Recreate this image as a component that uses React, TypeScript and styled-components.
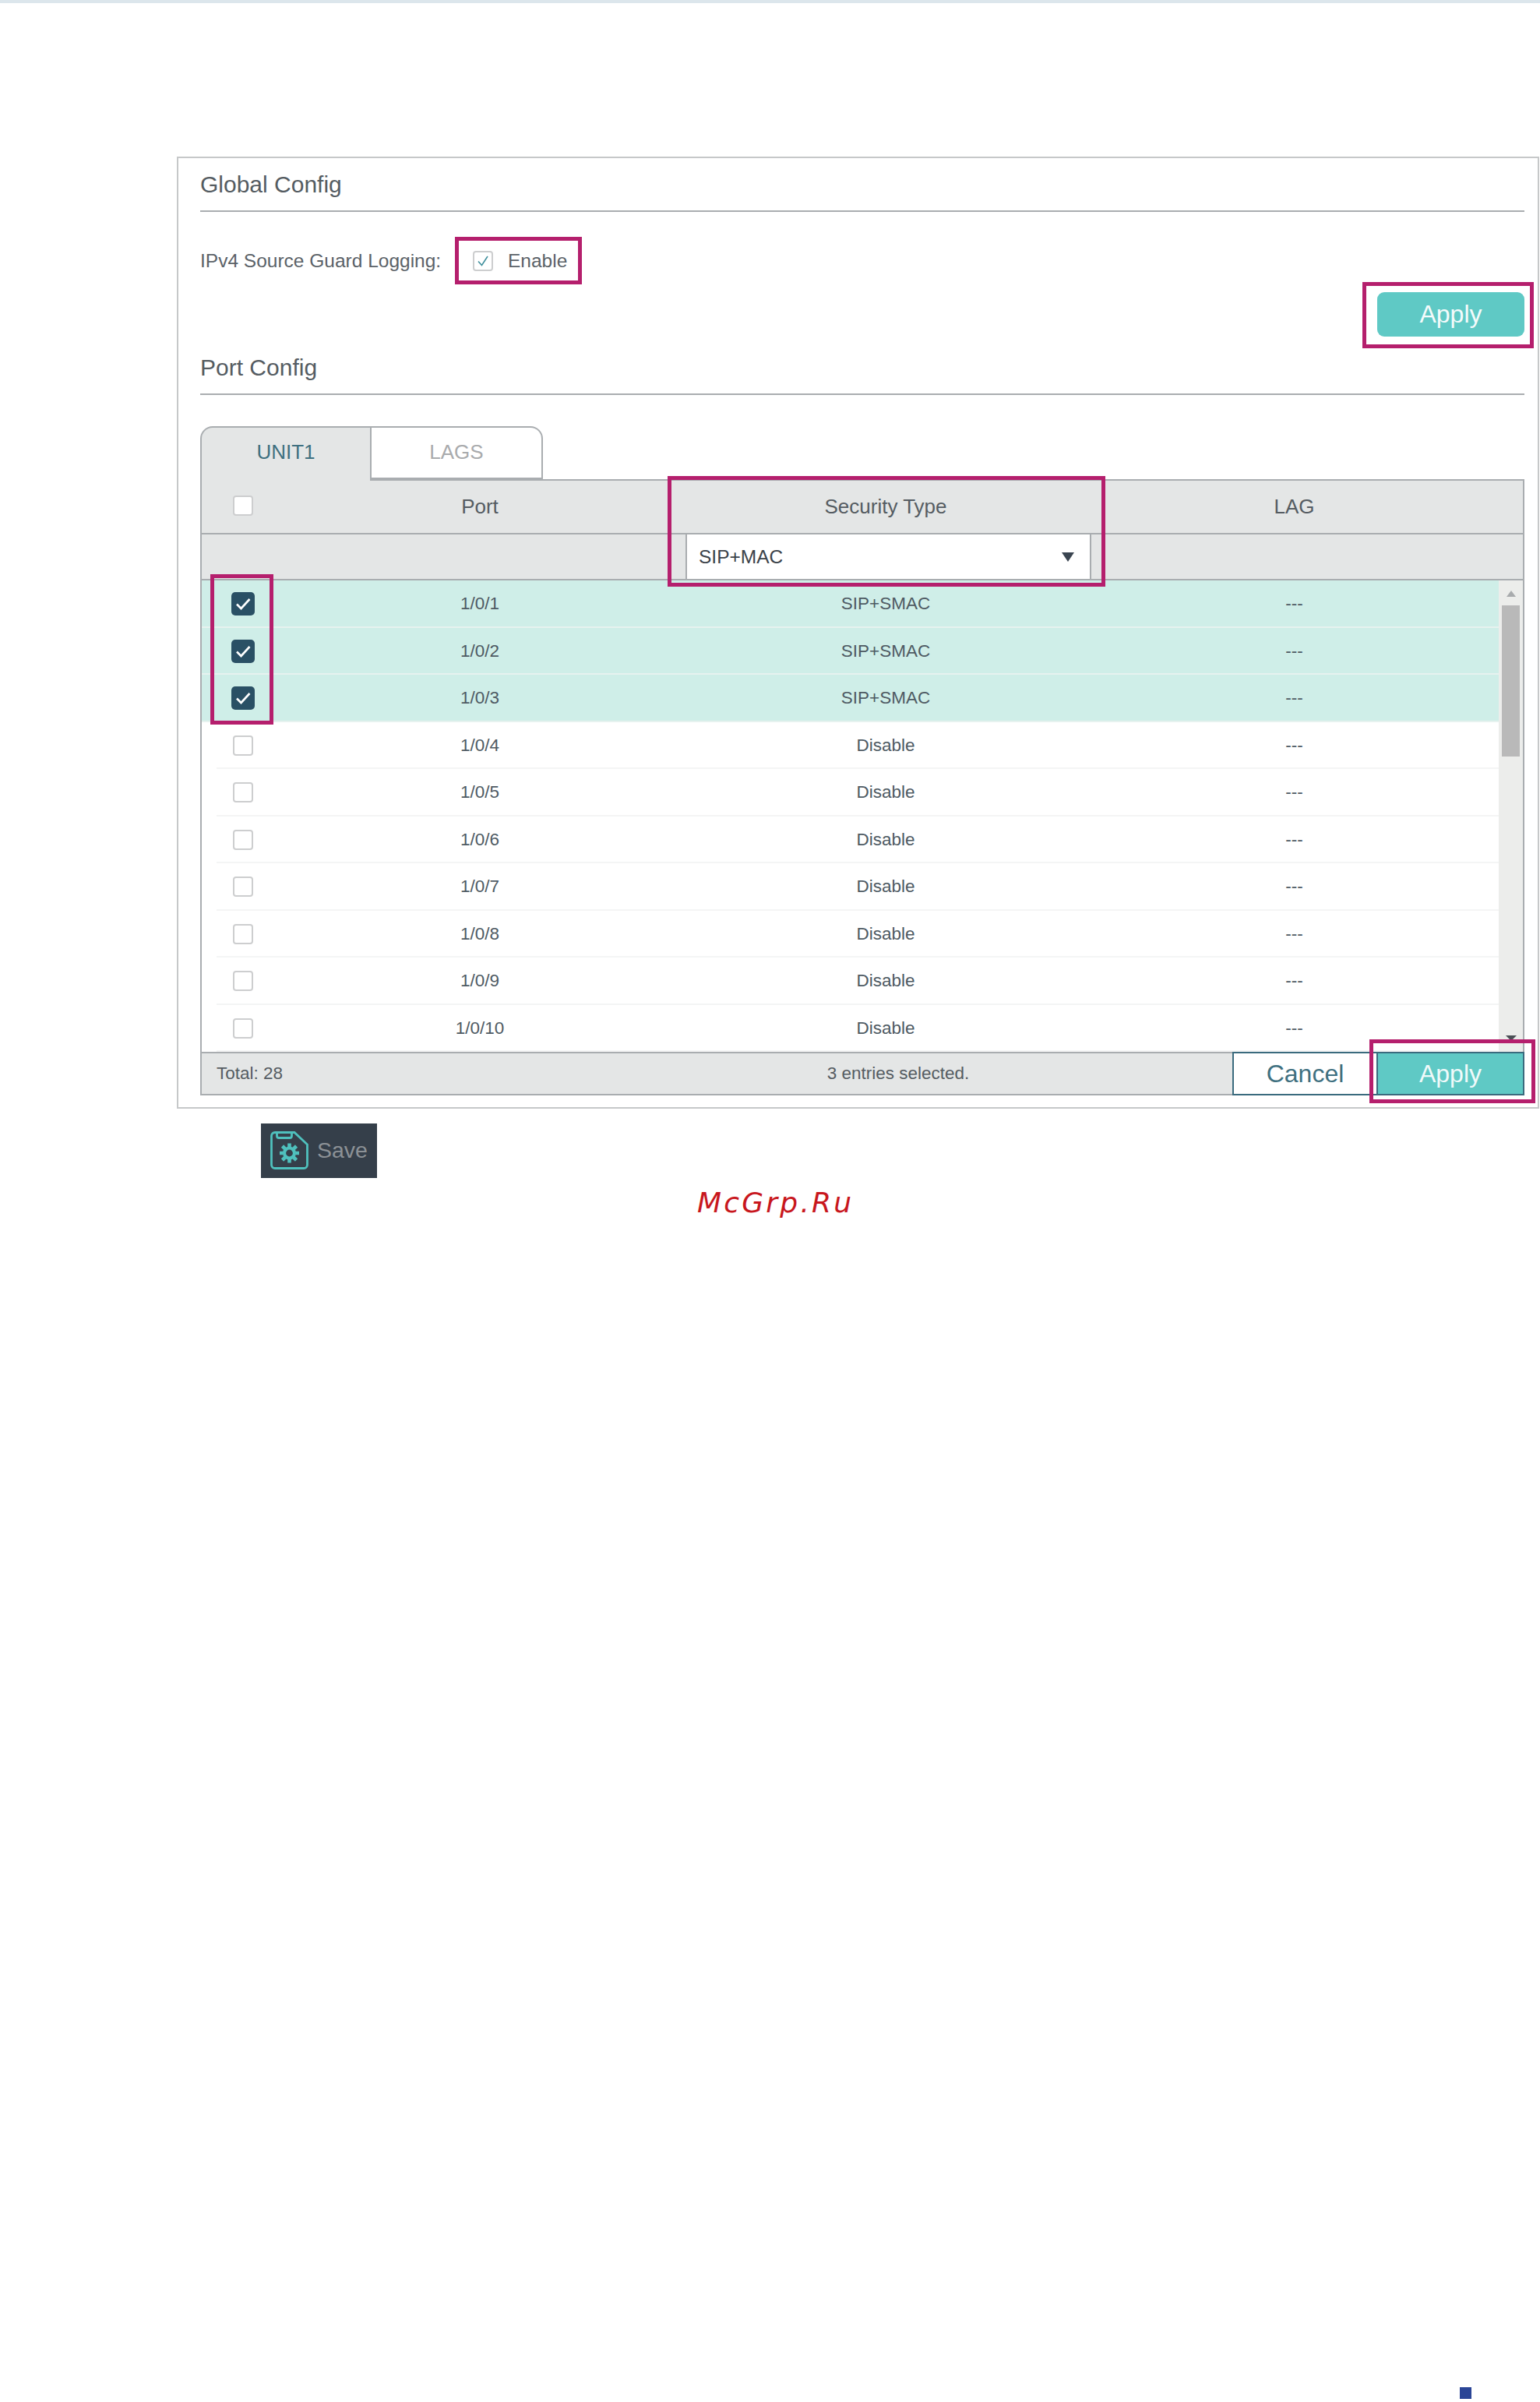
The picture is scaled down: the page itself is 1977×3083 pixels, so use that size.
import React from "react"
import styled, { createGlobalStyle } from "styled-components"

const GlobalStyle = createGlobalStyle`
  html, body {
    margin: 0;
    padding: 0;
    background: #fff;
  }
  * {
    box-sizing: border-box;
  }
`

const Page = styled.div`
  width: 1977px;
  height: 3083px;
  display: flex;
  flex-direction: column;
  overflow: hidden;
  font-family: "Liberation Sans", Arial, sans-serif;
  color: #555c62;
`

const TopBar = styled.div`
  height: 4px;
  flex: none;
  background: #dce6ec;
`

const Panel = styled.div`
  width: 1749px;
  margin: 197px 0 0 227px;
  padding: 0 17px 15px 28px;
  border: 2px solid #c6c8c9;
`

const SectionTitle = styled.h2`
  height: 69px;
  margin: 0;
  padding-top: 17px;
  border-bottom: 2px solid #a9adb0;
  font-size: 30px;
  line-height: 34px;
  font-weight: 400;
  color: #555c62;
`

const LoggingRow = styled.div`
  margin-top: 32px;
  display: flex;
  align-items: center;
  font-size: 24.5px;
`

const LoggingLabel = styled.span`
  width: 327px;
  color: #5b6268;
`

const EnableBox = styled.div`
  width: 163px;
  height: 61px;
  padding-left: 18px;
  display: flex;
  align-items: center;
  gap: 19px;
  border: 5px solid #b51f6d;
  color: #5b6268;
`

const ApplyRow = styled.div`
  margin: 10px 0 6px;
  display: flex;
  justify-content: flex-end;
`

const ApplyHost = styled.div`
  position: relative;
`

const RoundButton = styled.button`
  width: 189px;
  height: 57px;
  display: block;
  padding: 0;
  border: none;
  border-radius: 9px;
  background: #5fc9c5;
  color: #f4fbfb;
  font: 400 32px "Liberation Sans", Arial, sans-serif;
`

const Highlight = styled.div<{ $top: number; $left: number; $width: number; $height: number }>`
  position: absolute;
  z-index: 2;
  top: ${(p) => p.$top}px;
  left: ${(p) => p.$left}px;
  width: ${(p) => p.$width}px;
  height: ${(p) => p.$height}px;
  border: 5px solid #b51f6d;
  pointer-events: none;
`

const Tabs = styled.div`
  margin-top: 40px;
  display: flex;
  align-items: flex-start;
`

const Tab = styled.div<{ $active?: boolean }>`
  position: relative;
  z-index: 1;
  width: 220px;
  height: ${(p) => (p.$active ? "70px" : "68px")};
  margin-bottom: ${(p) => (p.$active ? "-2px" : "0")};
  padding-top: 16px;
  text-align: center;
  font-size: 26px;
  line-height: 30px;
  border-top: 2px solid #a9adb0;
  border-right: 2px solid #a9adb0;
  border-left: ${(p) => (p.$active ? "2px solid #a9adb0" : "none")};
  border-bottom: ${(p) => (p.$active ? "none" : "2px solid #a9adb0")};
  border-radius: ${(p) => (p.$active ? "16px 0 0 0" : "0 16px 0 0")};
  background: ${(p) => (p.$active ? "#e4e6e6" : "#fff")};
  color: ${(p) => (p.$active ? "#3f7080" : "#a9abad")};
`

const TableFrame = styled.div`
  position: relative;
  width: 1700px;
`

const columns = "108px 498px 544px 505px 1fr"

const HeadRow = styled.div<{ $height: number; $top?: boolean }>`
  height: ${(p) => p.$height}px;
  display: grid;
  grid-template-columns: ${columns};
  align-items: center;
  justify-items: center;
  background: #e4e6e6;
  font-size: 26px;
  color: #555c62;
  border-left: 2px solid #a9adb0;
  border-right: 2px solid #a9adb0;
  border-bottom: 2px solid #a9adb0;
  border-top: ${(p) => (p.$top ? "2px solid #a9adb0" : "none")};
`

const CheckCell = styled.div<{ $raised?: boolean }>`
  justify-self: start;
  margin-left: 40px;
  margin-top: ${(p) => (p.$raised ? "-3px" : "0")};
  display: flex;
  align-items: center;
`

const SelectCell = styled.div`
  grid-column: 3;
  justify-self: stretch;
  height: 57px;
  margin: 0 8px 0 15px;
  padding: 0 20px 0 15px;
  display: flex;
  align-items: center;
  justify-content: space-between;
  background: #fff;
  border-left: 2px solid #a9adb0;
  border-right: 2px solid #a9adb0;
  font-size: 24.5px;
  color: #3b4249;
`

const BodyFrame = styled.div`
  height: 605px;
  display: flex;
  border-left: 2px solid #a9adb0;
  border-right: 2px solid #a9adb0;
`

const Rows = styled.div`
  position: relative;
  width: 1665px;
  flex: none;
`

const Row = styled.div<{ $selected?: boolean }>`
  position: relative;
  height: 60.5px;
  display: grid;
  grid-template-columns: ${columns};
  align-items: center;
  justify-items: center;
  background: ${(p) => (p.$selected ? "#cfeee8" : "#fff")};
  font-size: 22.5px;
  color: #4e5a63;

  &::after {
    content: "";
    position: absolute;
    left: ${(p) => (p.$selected ? "0" : "19px")};
    right: 0;
    bottom: 0;
    height: 2px;
    background: ${(p) => (p.$selected ? "#e6f2ef" : "#f4f5f5")};
  }
`

const CheckedBoxWrap = styled.div`
  justify-self: start;
  margin-left: 38px;
  display: flex;
`

const EmptyBox = styled.span`
  width: 26px;
  height: 26px;
  display: block;
  border: 2px solid #cdcecf;
  border-radius: 4px;
  background: #fff;
`

const TickBox = styled.span`
  width: 26px;
  height: 26px;
  flex: none;
  display: flex;
  border: 2px solid #cdcecf;
  border-radius: 4px;
  background: #fff;
`

const CheckedBox = styled.span`
  width: 30px;
  height: 30px;
  display: flex;
  border-radius: 5px;
  background: #2a5065;
`

const Scrollbar = styled.div`
  flex: 1;
  padding: 13px 4px 14px;
  display: flex;
  flex-direction: column;
  align-items: center;
  background: #ecedeb;
`

const ArrowUp = styled.span`
  width: 0;
  height: 0;
  border-left: 6px solid transparent;
  border-right: 6px solid transparent;
  border-bottom: 8px solid #a8abad;
`

const ArrowDown = styled.span`
  margin-top: auto;
  width: 0;
  height: 0;
  border-left: 7px solid transparent;
  border-right: 7px solid transparent;
  border-top: 7px solid #4a4f55;
`

const Thumb = styled.div`
  width: 100%;
  height: 194px;
  margin-top: 11px;
  background: #b9b9b9;
`

const SelectArrow = styled.span`
  width: 0;
  height: 0;
  border-left: 8.5px solid transparent;
  border-right: 8.5px solid transparent;
  border-top: 12px solid #3a4550;
`

const TableFooter = styled.div`
  height: 56px;
  display: grid;
  grid-template-columns: 465px 858px 187px 188px;
  border-left: 2px solid #a9adb0;
  font-size: 22.5px;
  color: #555c62;
`

const FooterText = styled.div<{ $center?: boolean }>`
  display: flex;
  align-items: center;
  justify-content: ${(p) => (p.$center ? "center" : "flex-start")};
  padding-left: ${(p) => (p.$center ? "0" : "19px")};
  background: #e4e6e6;
  border-top: 2px solid #a9adb0;
  border-bottom: 2px solid #a9adb0;
`

const FooterHost = styled.div`
  position: relative;
  display: flex;
`

const FooterButton = styled.button<{ $primary?: boolean }>`
  width: 100%;
  padding: 0;
  border: 2px solid #3a6b7e;
  border-left-width: ${(p) => (p.$primary ? "0" : "2px")};
  background: ${(p) => (p.$primary ? "#5fc9c5" : "#fff")};
  color: ${(p) => (p.$primary ? "#f0fafa" : "#3f7080")};
  font: 400 32px "Liberation Sans", Arial, sans-serif;
`

const SaveButton = styled.div`
  width: 149px;
  height: 70px;
  margin: 19px 0 0 335px;
  padding: 0 0 2px 12px;
  flex: none;
  display: flex;
  align-items: center;
  gap: 11px;
  background: #353f4a;
  font-size: 28.5px;
  color: #8c9196;
`

const Watermark = styled.div`
  margin: 10px 0 0 895px;
  font-family: "DejaVu Sans", sans-serif;
  font-style: italic;
  font-size: 36px;
  line-height: 44px;
  letter-spacing: 3.2px;
  color: #c8171d;
`

const PageMark = styled.div`
  width: 15px;
  height: 15px;
  margin: auto 88px 4px auto;
  background: #2b4596;
`

const SaveIcon = () => (
  <svg width="49" height="49" viewBox="0 0 49 49" fill="none" stroke="#4fc0bd" strokeWidth="2.8">
    <path d="M6 1.5H31L47.5 17V43a4.5 4.5 0 0 1-4.5 4.5H6A4.5 4.5 0 0 1 1.5 43V6A4.5 4.5 0 0 1 6 1.5Z" />
    <path d="M8.5 1.5V6a2.5 2.5 0 0 0 2.5 2.5H25a2.5 2.5 0 0 0 2.5-2.5V1.5" />
    <circle cx="24.5" cy="28" r="6.5" strokeWidth="4.2" />
    <path
      d="M24.5 15.5V20M24.5 36V40.5M12 28H16.5M32.5 28H37M15.5 19L19 22.5M30 33.5L33.5 37M33.5 19L30 22.5M19 33.5L15.5 37"
      strokeWidth="4.6"
    />
  </svg>
)

const ports = Array.from({ length: 10 }, (_, i) => ({
  name: `1/0/${i + 1}`,
  selected: i < 3,
}))

export default function App() {
  return (
    <Page>
      <GlobalStyle />
      <TopBar />
      <Panel>
        <SectionTitle>Global Config</SectionTitle>
        <LoggingRow>
          <LoggingLabel>IPv4 Source Guard Logging:</LoggingLabel>
          <EnableBox>
            <TickBox>
              <svg width="22" height="22" viewBox="0 0 22 22" fill="none" stroke="#3f8f9c" strokeWidth="1.6">
                <path d="M5 11.5L9.5 16.5L17 5" />
              </svg>
            </TickBox>
            Enable
          </EnableBox>
        </LoggingRow>
        <ApplyRow>
          <ApplyHost>
            <RoundButton>Apply</RoundButton>
            <Highlight $top={-13} $left={-19} $width={220} $height={85} />
          </ApplyHost>
        </ApplyRow>
        <SectionTitle>Port Config</SectionTitle>
        <Tabs>
          <Tab $active>UNIT1</Tab>
          <Tab>LAGS</Tab>
        </Tabs>
        <TableFrame>
          <HeadRow $height={71} $top>
            <CheckCell $raised>
              <EmptyBox />
            </CheckCell>
            <span>Port</span>
            <span>Security Type</span>
            <span>LAG</span>
          </HeadRow>
          <HeadRow $height={59}>
            <SelectCell>
              SIP+MAC
              <SelectArrow />
            </SelectCell>
          </HeadRow>
          <Highlight $top={-4} $left={600} $width={562} $height={142} />
          <BodyFrame>
            <Rows>
              {ports.map((port) => (
                <Row key={port.name} $selected={port.selected}>
                  {port.selected ? (
                    <CheckedBoxWrap>
                      <CheckedBox>
                        <svg width="30" height="30" viewBox="0 0 30 30" fill="none" stroke="#fff" strokeWidth="2.6">
                          <path d="M7 15.5L12.5 21L23.5 9" />
                        </svg>
                      </CheckedBox>
                    </CheckedBoxWrap>
                  ) : (
                    <CheckCell>
                      <EmptyBox />
                    </CheckCell>
                  )}
                  <span>{port.name}</span>
                  <span>{port.selected ? "SIP+SMAC" : "Disable"}</span>
                  <span>---</span>
                </Row>
              ))}
              <Highlight $top={-8} $left={11} $width={81} $height={193} />
            </Rows>
            <Scrollbar>
              <ArrowUp />
              <Thumb />
              <ArrowDown />
            </Scrollbar>
          </BodyFrame>
          <TableFooter>
            <FooterText>Total: 28</FooterText>
            <FooterText $center>3 entries selected.</FooterText>
            <FooterHost>
              <FooterButton>Cancel</FooterButton>
            </FooterHost>
            <FooterHost>
              <FooterButton $primary>Apply</FooterButton>
              <Highlight $top={-16} $left={-11} $width={213} $height={82} />
            </FooterHost>
          </TableFooter>
        </TableFrame>
      </Panel>
      <SaveButton>
        <SaveIcon />
        Save
      </SaveButton>
      <Watermark>McGrp.Ru</Watermark>
      <PageMark />
    </Page>
  )
}
